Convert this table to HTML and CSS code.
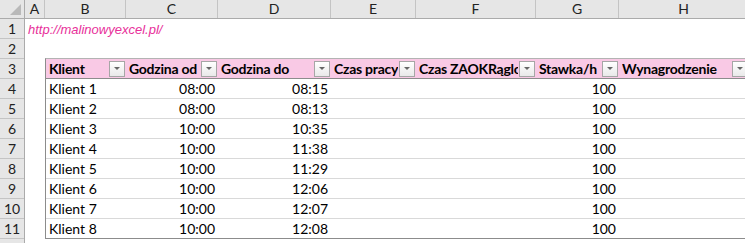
FILE: index.html
```html
<!DOCTYPE html>
<html lang="pl">
<head>
<meta charset="utf-8">
<title>Arkusz</title>
<link rel="stylesheet" href="styles.css">
</head>
<body>
<div class="sheet">
  <div class="corner">
    <svg width="24" height="18" viewBox="0 0 24 18"><polygon points="10,15 21,15 21,4" fill="#b9b9b9"/></svg>
  </div>
  <div class="colheads">
    <div class="ch w-a">A</div>
    <div class="ch w-b">B</div>
    <div class="ch w-c">C</div>
    <div class="ch w-d">D</div>
    <div class="ch w-e">E</div>
    <div class="ch w-f">F</div>
    <div class="ch w-g">G</div>
    <div class="ch w-h">H</div>
  </div>
  <div class="rowheads">
    <div class="rh">1</div><div class="rh">2</div><div class="rh">3</div><div class="rh">4</div>
    <div class="rh">5</div><div class="rh">6</div><div class="rh">7</div><div class="rh">8</div>
    <div class="rh">9</div><div class="rh">10</div><div class="rh">11</div><div class="rh"></div>
  </div>
  <div class="body">
    <div class="row1"><span class="url">http://malinowyexcel.pl/</span></div>
    <div class="row2"></div>
    <div class="table">
      <div class="thead">
        <div class="th w-b"><span class="tt">Klient</span><span class="fb"></span></div>
        <div class="th w-c"><span class="tt">Godzina od</span><span class="fb"></span></div>
        <div class="th w-d"><span class="tt">Godzina do</span><span class="fb"></span></div>
        <div class="th w-e"><span class="tt">Czas pracy</span><span class="fb"></span></div>
        <div class="th w-f"><span class="tt">Czas ZAOKRąglony</span><span class="fb"></span></div>
        <div class="th w-g"><span class="tt">Stawka/h</span><span class="fb"></span></div>
        <div class="th w-h"><span class="tt">Wynagrodzenie</span><span class="fb"></span></div>
      </div>
      <div class="tr"><div class="td w-b">Klient 1</div><div class="td w-c num">08:00</div><div class="td w-d num">08:15</div><div class="td w-e"></div><div class="td w-f"></div><div class="td w-g num">100</div><div class="td w-h"></div></div>
      <div class="tr"><div class="td w-b">Klient 2</div><div class="td w-c num">08:00</div><div class="td w-d num">08:13</div><div class="td w-e"></div><div class="td w-f"></div><div class="td w-g num">100</div><div class="td w-h"></div></div>
      <div class="tr"><div class="td w-b">Klient 3</div><div class="td w-c num">10:00</div><div class="td w-d num">10:35</div><div class="td w-e"></div><div class="td w-f"></div><div class="td w-g num">100</div><div class="td w-h"></div></div>
      <div class="tr"><div class="td w-b">Klient 4</div><div class="td w-c num">10:00</div><div class="td w-d num">11:38</div><div class="td w-e"></div><div class="td w-f"></div><div class="td w-g num">100</div><div class="td w-h"></div></div>
      <div class="tr"><div class="td w-b">Klient 5</div><div class="td w-c num">10:00</div><div class="td w-d num">11:29</div><div class="td w-e"></div><div class="td w-f"></div><div class="td w-g num">100</div><div class="td w-h"></div></div>
      <div class="tr"><div class="td w-b">Klient 6</div><div class="td w-c num">10:00</div><div class="td w-d num">12:06</div><div class="td w-e"></div><div class="td w-f"></div><div class="td w-g num">100</div><div class="td w-h"></div></div>
      <div class="tr"><div class="td w-b">Klient 7</div><div class="td w-c num">10:00</div><div class="td w-d num">12:07</div><div class="td w-e"></div><div class="td w-f"></div><div class="td w-g num">100</div><div class="td w-h"></div></div>
      <div class="tr last"><div class="td w-b">Klient 8</div><div class="td w-c num">10:00</div><div class="td w-d num">12:08</div><div class="td w-e"></div><div class="td w-f"></div><div class="td w-g num">100</div><div class="td w-h"></div></div>
    </div>
  </div>
</div>
</body>
</html>
```
FILE: styles.css
```css
html, body {
  margin: 0;
  padding: 0;
  background: #ffffff;
  overflow: hidden;
}
body {
  font-family: "Lato", "Liberation Sans", sans-serif;
  font-size: 14px;
  color: #000;
}
.sheet {
  display: grid;
  grid-template-columns: 25px 720px;
  grid-template-rows: 19px auto;
  width: 745px;
  height: 243px;
  overflow: hidden;
}
.corner {
  background: #e6e6e6;
  border-right: 1px solid #ababab;
  border-bottom: 1px solid #ababab;
  box-sizing: border-box;
  display: flex;
}
.colheads {
  display: flex;
  background: #e6e6e6;
  border-bottom: 1px solid #ababab;
  box-sizing: border-box;
}
.ch {
  flex: none;
  box-sizing: border-box;
  border-right: 1px solid #c4c4c4;
  text-align: center;
  font-size: 14px;
  line-height: 18px;
  color: #222;
}
.w-a { width: 20px; }
.w-b { width: 81px; }
.w-c { width: 92px; }
.w-d { width: 113px; }
.w-e { width: 85px; }
.w-f { width: 120px; }
.w-g { width: 83px; }
.w-h { width: 130px; }
.rowheads {
  display: flex;
  flex-direction: column;
  background: #e6e6e6;
  border-right: 1px solid #ababab;
  box-sizing: border-box;
}
.rh {
  flex: none;
  height: 20px;
  box-sizing: border-box;
  border-bottom: 1px solid #c4c4c4;
  text-align: center;
  line-height: 20px;
  font-size: 14px;
  color: #222;
}
.body {
  display: flex;
  flex-direction: column;
}
.row1 {
  height: 20px;
  display: flex;
  align-items: center;
  padding-left: 3px;
}
.url {
  font-family: "Liberation Sans", Arial, sans-serif;
  font-style: italic;
  font-size: 13px;
  color: #e8309a;
}
.row2 {
  height: 19px;
}
.table {
  margin-left: 20px;
  border-top: 1px solid #b3b3b3;
  border-left: 1px solid #8c8c8c;
  width: max-content;
}
.thead {
  display: flex;
  background: #f9c9e5;
  height: 19px;
  border-bottom: 1px solid #8c8c8c;
}
.th {
  flex: none;
  box-sizing: border-box;
  display: flex;
  align-items: center;
  gap: 1px;
  padding: 0 1px 0 3px;
  font-weight: bold;
  letter-spacing: -0.25px;
}
.th.w-b { width: 80px; }
.tt {
  flex: 1;
  min-width: 0;
  overflow: hidden;
  white-space: nowrap;
  line-height: 19px;
}
.fb {
  flex: none;
  width: 14px;
  height: 14px;
  border: 1px solid #a6a6a6;
  background: linear-gradient(#ffffff, #e9e9e9);
  display: flex;
  align-items: center;
  justify-content: center;
}
.fb::after {
  content: "";
  border-left: 3px solid transparent;
  border-right: 3px solid transparent;
  border-top: 3px solid #666;
}
.tr {
  display: flex;
  height: 19px;
  border-bottom: 1px solid #d9d9d9;
}
.tr.last {
  border-bottom-color: #8c8c8c;
}
.td {
  flex: none;
  box-sizing: border-box;
  padding: 0 3px;
  line-height: 19px;
  white-space: nowrap;
  overflow: hidden;
}
.td.w-b { width: 80px; }
.num {
  text-align: right;
}
```
